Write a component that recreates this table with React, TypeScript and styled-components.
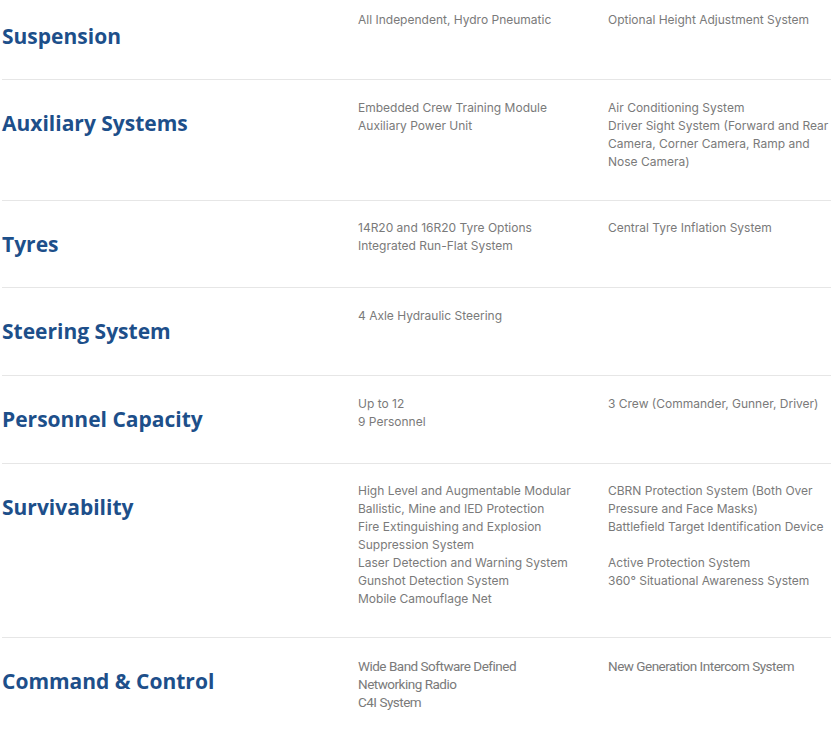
import React from "react";
import styled, {createGlobalStyle} from "styled-components";

const GlobalStyle = createGlobalStyle`
  html, body {
    margin: 0;
    padding: 0;
    background: #fff;
  }

  body {
    font-family: Inter, "Open Sans", sans-serif;
  }
`;

const SpecList = styled.section`
  margin: -7.5px 4px 0 2px;
`;

const SpecRow = styled.div`
  display: grid;
  grid-template-columns: 324px 218px 1fr;
  column-gap: 32px;
  border-bottom: 1px solid #e6e6e6;

  &:last-child {
    border-bottom: none;
  }
`;

const Title = styled.h3`
  margin: 0;
  padding: 30px 0 30.7px;
  font-family: "Open Sans", Roboto, sans-serif;
  font-size: 21px;
  line-height: 26px;
  font-weight: 700;
  color: #1d4f8a;
`;

const Cell = styled.div<{ $narrow?: boolean }>`
  padding: 18.5px 0 29px 0;
  font-family: ${p => p.$narrow ? `Roboto, sans-serif` : `Inter, "Open Sans", sans-serif`};
  font-size: ${p => p.$narrow ? "13.5px" : "12px"};
  letter-spacing: ${p => p.$narrow ? "-0.5px" : "normal"};
  line-height: 18px;
  color: #7a7a7a;

  p {
    margin: 0;
  }
`;

type Spec = {
    title: string;
    left: string[];
    right: string[];
    narrow?: boolean;
};

const specs: Spec[] = [
    {title: "Suspension", left: ["All Independent, Hydro Pneumatic"], right: ["Optional Height Adjustment System"]},
    {
        title: "Auxiliary Systems",
        left: ["Embedded Crew Training Module", "Auxiliary Power Unit"],
        right: ["Air Conditioning System", "Driver Sight System (Forward and Rear Camera, Corner Camera, Ramp and Nose Camera)"]
    },
    {
        title: "Tyres",
        left: ["14R20 and 16R20 Tyre Options", "Integrated Run-Flat System"],
        right: ["Central Tyre Inflation System"]
    },
    {title: "Steering System", left: ["4 Axle Hydraulic Steering"], right: []},
    {title: "Personnel Capacity", left: ["Up to 12", "9 Personnel"], right: ["3 Crew (Commander, Gunner, Driver)"]},
    {
        title: "Survivability",
        left: [
            "High Level and Augmentable Modular Ballistic, Mine and IED Protection",
            "Fire Extinguishing and Explosion Suppression System",
            "Laser Detection and Warning System",
            "Gunshot Detection System",
            "Mobile Camouflage Net"
        ],
        right: [
            "CBRN Protection System (Both Over Pressure and Face Masks)",
            "Battlefield Target Identification Device",
            "\u00a0",
            "Active Protection System",
            "360° Situational Awareness System"
        ]
    },
    {
        title: "Command & Control",
        left: ["Wide Band Software Defined Networking Radio", "C4I System"],
        right: ["New Generation Intercom System"],
        narrow: true
    }
];

const App = () => {
    return (
        <>
            <GlobalStyle/>
            <SpecList>
                {specs.map(spec => (
                    <SpecRow key={spec.title}>
                        <Title>{spec.title}</Title>
                        <Cell $narrow={spec.narrow}>
                            {spec.left.map(line => <p key={line}>{line}</p>)}
                        </Cell>
                        <Cell $narrow={spec.narrow}>
                            {spec.right.map((line, i) => <p key={i}>{line}</p>)}
                        </Cell>
                    </SpecRow>
                ))}
            </SpecList>
        </>
    )
}

export default App
